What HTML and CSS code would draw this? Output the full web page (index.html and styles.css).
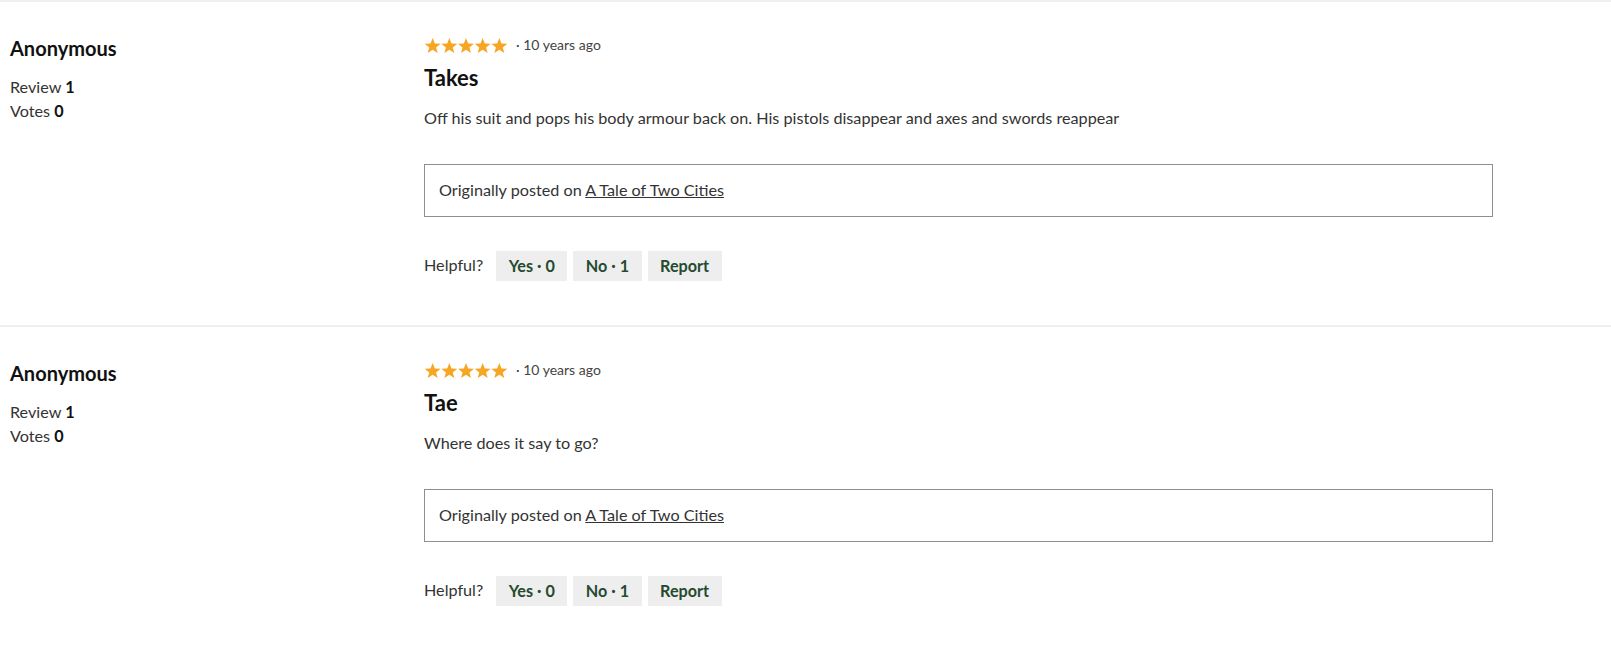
FILE: index.html
```html
<!DOCTYPE html>
<html lang="en">
<head>
<meta charset="utf-8">
<title>Reviews</title>
<link rel="stylesheet" href="styles.css">
</head>
<body>
<div class="reviews">
  <article class="review">
    <div class="author">
      <div class="author-name">Anonymous</div>
      <div class="author-stat">Review <b>1</b></div>
      <div class="author-stat">Votes <b>0</b></div>
    </div>
    <div class="content">
      <div class="meta">
        <svg class="stars" viewBox="0 0 100 18" width="84" height="15" aria-label="5 stars">
          <g fill="#f6a623">
            <polygon points="10,0 12.6,6.6 19.6,6.9 14.1,11.3 16,18 10,14.2 4,18 5.9,11.3 0.4,6.9 7.4,6.6"/>
            <polygon transform="translate(20 0)" points="10,0 12.6,6.6 19.6,6.9 14.1,11.3 16,18 10,14.2 4,18 5.9,11.3 0.4,6.9 7.4,6.6"/>
            <polygon transform="translate(40 0)" points="10,0 12.6,6.6 19.6,6.9 14.1,11.3 16,18 10,14.2 4,18 5.9,11.3 0.4,6.9 7.4,6.6"/>
            <polygon transform="translate(60 0)" points="10,0 12.6,6.6 19.6,6.9 14.1,11.3 16,18 10,14.2 4,18 5.9,11.3 0.4,6.9 7.4,6.6"/>
            <polygon transform="translate(80 0)" points="10,0 12.6,6.6 19.6,6.9 14.1,11.3 16,18 10,14.2 4,18 5.9,11.3 0.4,6.9 7.4,6.6"/>
          </g>
        </svg>
        <span class="date">· 10 years ago</span>
      </div>
      <h2 class="title">Takes</h2>
      <p class="body">Off his suit and pops his body armour back on. His pistols disappear and axes and swords reappear</p>
      <div class="source">Originally posted on <a href="#">A Tale of Two Cities</a></div>
      <div class="helpful">
        <span class="helpful-label">Helpful?</span>
        <button class="btn">Yes · 0</button>
        <button class="btn">No · 1</button>
        <button class="btn">Report</button>
      </div>
    </div>
  </article>
  <article class="review">
    <div class="author">
      <div class="author-name">Anonymous</div>
      <div class="author-stat">Review <b>1</b></div>
      <div class="author-stat">Votes <b>0</b></div>
    </div>
    <div class="content">
      <div class="meta">
        <svg class="stars" viewBox="0 0 100 18" width="84" height="15" aria-label="5 stars">
          <g fill="#f6a623">
            <polygon points="10,0 12.6,6.6 19.6,6.9 14.1,11.3 16,18 10,14.2 4,18 5.9,11.3 0.4,6.9 7.4,6.6"/>
            <polygon transform="translate(20 0)" points="10,0 12.6,6.6 19.6,6.9 14.1,11.3 16,18 10,14.2 4,18 5.9,11.3 0.4,6.9 7.4,6.6"/>
            <polygon transform="translate(40 0)" points="10,0 12.6,6.6 19.6,6.9 14.1,11.3 16,18 10,14.2 4,18 5.9,11.3 0.4,6.9 7.4,6.6"/>
            <polygon transform="translate(60 0)" points="10,0 12.6,6.6 19.6,6.9 14.1,11.3 16,18 10,14.2 4,18 5.9,11.3 0.4,6.9 7.4,6.6"/>
            <polygon transform="translate(80 0)" points="10,0 12.6,6.6 19.6,6.9 14.1,11.3 16,18 10,14.2 4,18 5.9,11.3 0.4,6.9 7.4,6.6"/>
          </g>
        </svg>
        <span class="date">· 10 years ago</span>
      </div>
      <h2 class="title">Tae</h2>
      <p class="body">Where does it say to go?</p>
      <div class="source">Originally posted on <a href="#">A Tale of Two Cities</a></div>
      <div class="helpful">
        <span class="helpful-label">Helpful?</span>
        <button class="btn">Yes · 0</button>
        <button class="btn">No · 1</button>
        <button class="btn">Report</button>
      </div>
    </div>
  </article>
</div>
</body>
</html>
```
FILE: styles.css
```css
* { box-sizing: border-box; }

html, body {
  margin: 0;
  padding: 0;
  background: #fff;
}

body {
  font-family: Lato, "Open Sans", Arial, sans-serif;
  color: #333;
  font-size: 16.2px;
  line-height: 24px;
}

.review {
  display: grid;
  grid-template-columns: 414px 1069px;
  padding: 34px 0 44px 10px;
  border-top: 2px solid #efefef;
}

.author-name {
  font-size: 20px;
  line-height: 24px;
  font-weight: 700;
  color: #111;
  margin-bottom: 15px;
}

.author-stat {
  font-size: 16.2px;
  line-height: 24px;
  color: #333;
}

.author-stat b {
  color: #111;
}

.meta {
  display: flex;
  align-items: center;
  height: 18px;
  gap: 8px;
}

.stars {
  display: block;
}

.date {
  font-size: 14px;
  line-height: 18px;
  color: #444;
}

.title {
  margin: 11px 0 0;
  font-size: 22px;
  line-height: 26px;
  font-weight: 700;
  color: #111;
}

.body {
  margin: 15px 0 0;
  font-size: 16.2px;
  line-height: 24px;
  color: #333;
}

.source {
  margin-top: 34px;
  border: 1px solid #8e8e8e;
  padding: 13px 14px 14px;
  line-height: 24px;
  color: #333;
}

.source a {
  color: #333;
  text-decoration: underline;
}

.helpful {
  margin-top: 34px;
  display: flex;
  align-items: center;
  gap: 6px;
}

.helpful-label {
  line-height: 24px;
  margin-right: 7px;
  margin-top: -2px;
}

.btn {
  font-family: inherit;
  font-size: 16.2px;
  font-weight: 700;
  line-height: 24px;
  height: 30px;
  padding: 3px 12.5px;
  border: none;
  background: #eeeeee;
  color: #254a30;
  cursor: pointer;
}
```
